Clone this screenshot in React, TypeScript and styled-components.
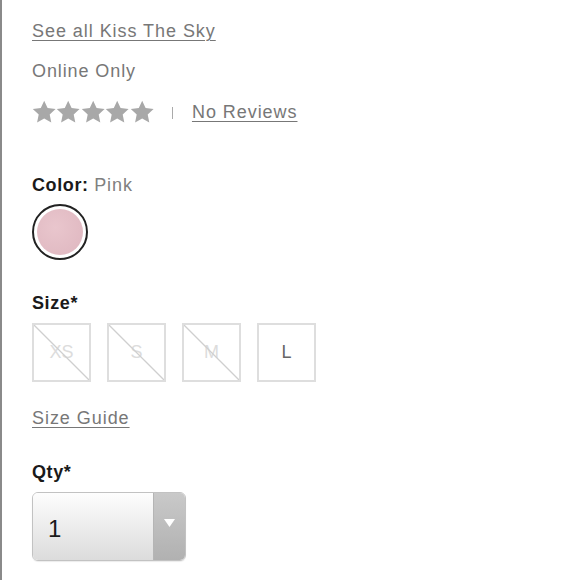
import React from 'react';
import styled, { createGlobalStyle } from 'styled-components';

const GlobalStyle = createGlobalStyle`
  html, body {
    margin: 0;
    padding: 0;
    background: #fff;
  }
  body {
    font-family: "Liberation Sans", Arial, sans-serif;
  }
`;

const Page = styled.div`
  width: 580px;
  height: 580px;
  box-sizing: border-box;
  border-left: 2px solid #8a8a8a;
  padding: 21px 0 0 30px;
  overflow: hidden;
`;

const Link = styled.a`
  display: inline-block;
  color: #777;
  font-size: 18px;
  letter-spacing: 0.95px;
  text-decoration: underline;
  text-decoration-thickness: 1px;
  text-underline-offset: 3px;
  cursor: pointer;
`;

const Note = styled.div`
  color: #777;
  font-size: 18px;
  letter-spacing: 0.9px;
  margin-top: 19px;
`;

const RatingRow = styled.div`
  display: flex;
  align-items: center;
  margin-top: 18px;
`;

const Stars = styled.div`
  display: flex;
`;

const Divider = styled.span`
  width: 1px;
  height: 12px;
  background: #aaa;
  margin: 2px 19px 0 18px;
`;

const Section = styled.div<{ $top: number }>`
  margin-top: ${p => p.$top}px;
`;

const Label = styled.div`
  font-size: 18px;
  font-weight: bold;
  color: #1a1a1a;
  letter-spacing: 0.6px;
`;

const LabelValue = styled.span`
  font-weight: normal;
  color: #808080;
  letter-spacing: 0.9px;
`;

const Swatch = styled.div`
  width: 46px;
  height: 46px;
  margin-top: 8px;
  border-radius: 50%;
  border: 2px solid #222;
  padding: 3px;
  box-sizing: content-box;
  background: #fff;
`;

const SwatchFill = styled.div`
  width: 100%;
  height: 100%;
  border-radius: 50%;
  background: radial-gradient(circle at 40% 40%, #e9c6cd, #deb6bf);
`;

const SizeRow = styled.div`
  display: flex;
  gap: 16px;
  margin-top: 9px;
`;

const SizeBox = styled.div<{ $disabled?: boolean }>`
  position: relative;
  width: 59px;
  height: 59px;
  box-sizing: border-box;
  border: 2px solid #dedede;
  display: flex;
  align-items: center;
  justify-content: center;
  font-size: 18px;
  color: ${p => (p.$disabled ? '#dcdcdc' : '#666')};
  background: #fff;
`;

const Slash = styled.svg`
  position: absolute;
  inset: 0;
  width: 100%;
  height: 100%;
`;

const Select = styled.div`
  display: flex;
  width: 154px;
  height: 69px;
  margin-top: 9px;
  border: 1px solid #c2c2c2;
  border-radius: 6px;
  overflow: hidden;
  box-sizing: border-box;
  box-shadow: 0 1px 1px rgba(0, 0, 0, 0.08);
`;

const SelectValue = styled.div`
  flex: 1;
  display: flex;
  align-items: center;
  padding-left: 15px;
  padding-top: 4px;
  font-size: 24px;
  color: #1a1a1a;
  background: linear-gradient(#fdfdfd, #dcdcdc);
`;

const SelectArrow = styled.div`
  width: 32px;
  display: flex;
  justify-content: center;
  padding-top: 26px;
  box-sizing: border-box;
  background: linear-gradient(#c9c9c9, #b1b1b1);
  border-left: 1px solid #b5b5b5;
`;

const Star = () => (
  <svg width="24.4" height="24" viewBox="0 0 24 24">
    <path
      d="M12 .8l3.4 7.3 8 .9-5.9 5.5 1.6 7.9L12 18.4l-7.1 4 1.6-7.9L.6 9l8-.9z"
      fill="#a8a8a8"
    />
  </svg>
);

const sizes = [
  { label: 'XS', disabled: true },
  { label: 'S', disabled: true },
  { label: 'M', disabled: true },
  { label: 'L', disabled: false },
];

const App: React.FC = () => (
  <>
    <GlobalStyle />
    <Page>
      <Link>See all Kiss The Sky</Link>
      <Note>Online Only</Note>
      <RatingRow>
        <Stars>
          {[0, 1, 2, 3, 4].map(i => (
            <Star key={i} />
          ))}
        </Stars>
        <Divider />
        <Link>No Reviews</Link>
      </RatingRow>

      <Section $top={51}>
        <Label>
          Color: <LabelValue>Pink</LabelValue>
        </Label>
        <Swatch>
          <SwatchFill />
        </Swatch>
      </Section>

      <Section $top={33}>
        <Label>Size*</Label>
        <SizeRow>
          {sizes.map(s => (
            <SizeBox key={s.label} $disabled={s.disabled}>
              {s.label}
              {s.disabled && (
                <Slash viewBox="0 0 55 55" preserveAspectRatio="none">
                  <line x1="0" y1="0" x2="55" y2="55" stroke="#cfcfcf" strokeWidth="1.3" />
                </Slash>
              )}
            </SizeBox>
          ))}
        </SizeRow>
      </Section>

      <Section $top={26}>
        <Link>Size Guide</Link>
      </Section>

      <Section $top={33}>
        <Label>Qty*</Label>
        <Select>
          <SelectValue>1</SelectValue>
          <SelectArrow>
            <svg width="11" height="8" viewBox="0 0 11 8">
              <path d="M0 0h11L5.5 8z" fill="#fff" />
            </svg>
          </SelectArrow>
        </Select>
      </Section>
    </Page>
  </>
);

export default App;
